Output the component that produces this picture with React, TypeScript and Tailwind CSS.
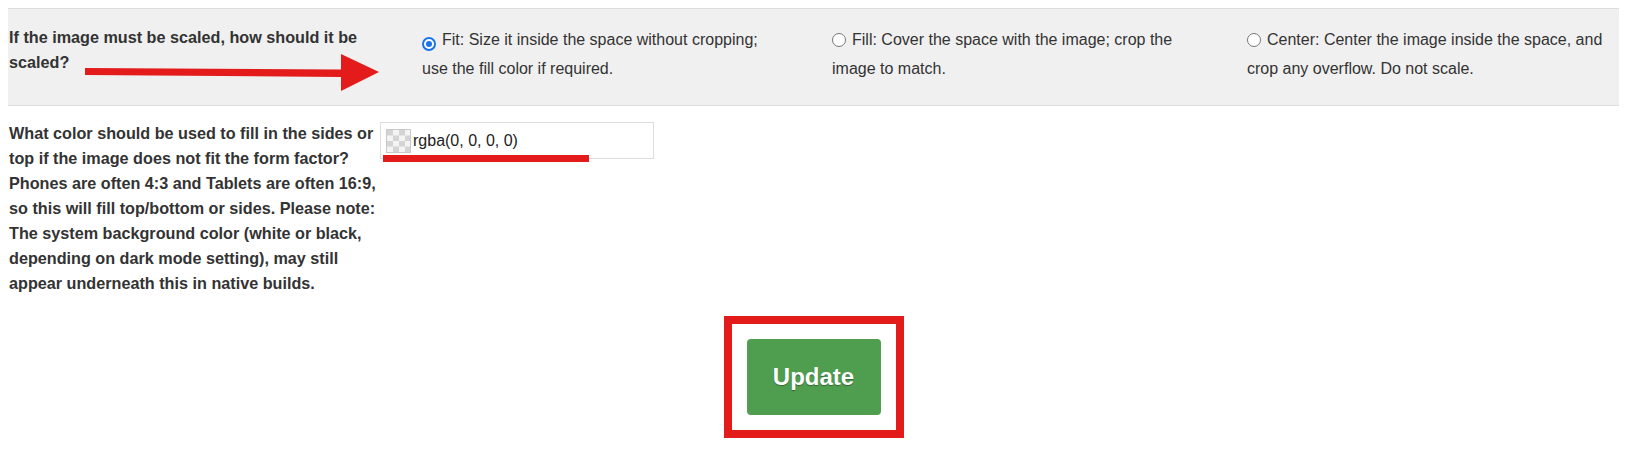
import React from 'react';

type Option = {
  id: string;
  label: string;
  checked: boolean;
  width: string;
};

const options: Option[] = [
  { id: 'fit', label: 'Fit: Size it inside the space without cropping; use the fill color if required.', checked: true, width: 'w-[410px] pr-[50px]' },
  { id: 'fill', label: 'Fill: Cover the space with the image; crop the image to match.', checked: false, width: 'w-[415px] pr-[40px]' },
  { id: 'center', label: 'Center: Center the image inside the space, and crop any overflow. Do not scale.', checked: false, width: 'flex-1' },
];

const Radio: React.FC<{ checked: boolean }> = ({ checked }) =>
  checked ? (
    <span className="inline-flex items-center justify-center w-[14px] h-[14px] rounded-full border-2 border-[#1a73e8] bg-white align-[-2px] mr-[6px]">
      <span className="w-[6px] h-[6px] rounded-full bg-[#1a73e8]" />
    </span>
  ) : (
    <span className="inline-block w-[14px] h-[14px] rounded-full border border-[#767676] bg-white align-[-2px] mr-[6px]" />
  );

const Checker = () => (
  <svg width="25" height="24" viewBox="0 0 25 24" className="shrink-0">
    <rect x="0" y="0" width="25" height="24" fill="#f4f4f4" />
    {[0, 1, 2, 3].map((r) =>
      [0, 1, 2, 3].map((c) =>
        (r + c) % 2 === 0 ? (
          <rect key={`${r}-${c}`} x={1 + c * 6} y={1 + r * 5.5} width="6" height="5.5" fill="#d4d4d4" />
        ) : null
      )
    )}
    <rect x="0.5" y="0.5" width="24" height="23" fill="none" stroke="#c8c8c8" />
  </svg>
);

export default function App() {
  return (
    <div className="min-h-[475px] bg-white p-2 font-['Liberation_Sans',Arial,sans-serif] text-[#333]">
      {/* scaling mode row */}
      <div className="relative flex h-[98px] border-y border-[#ddd] bg-[#f0f0f0]">
        <div className="w-[414px] shrink-0 pl-[1px] pr-[48px] pt-[16px] text-[16.2px] font-bold leading-[25px]">
          If the image must be scaled, how should it be scaled?
        </div>
        {options.map((o) => (
          <div key={o.id} className={`${o.width} shrink-0 pt-[16px] text-[16px] leading-[29px]`}>
            <Radio checked={o.checked} />
            {o.label}
          </div>
        ))}
        <svg
          className="absolute left-[76px] top-[44px]"
          width="296"
          height="40"
          viewBox="0 0 296 40"
        >
          <polygon points="1,15 257,16.5 257,1 295,19 257,38 257,24 1,22" fill="#e31b1b" />
        </svg>
      </div>

      {/* fill color row */}
      <div className="flex items-start pt-[15px]">
        <div className="w-[372px] shrink-0 pl-[1px] text-[16.2px] font-bold leading-[25px]">
          What color should be used to fill in the sides or top if the image does not fit the form factor? Phones
          are often 4:3 and Tablets are often 16:9, so this will fill top/bottom or sides. Please note: The system
          background color (white or black, depending on dark mode setting), may still appear underneath this in
          native builds.
        </div>
        <div className="relative mt-[1px] flex h-[37px] w-[274px] items-center gap-[2px] border border-[#ddd] bg-white pl-[5px] text-[16px] text-[#222]">
          <Checker />
          <span>rgba(0, 0, 0, 0)</span>
          <div className="absolute left-[2px] top-[32px] h-[7px] w-[206px] bg-[#e31b1b]" />
        </div>
      </div>

      {/* submit */}
      <div className="flex justify-center pt-[20px]">
        <div className="border-8 border-[#e31b1b] p-[15px]">
          <button className="h-[76px] w-[134px] rounded-[4px] bg-[#4f9d4f] text-[24px] font-bold text-white [text-shadow:0_1px_1px_rgba(0,0,0,0.35)]">
            Update
          </button>
        </div>
      </div>
    </div>
  );
}
